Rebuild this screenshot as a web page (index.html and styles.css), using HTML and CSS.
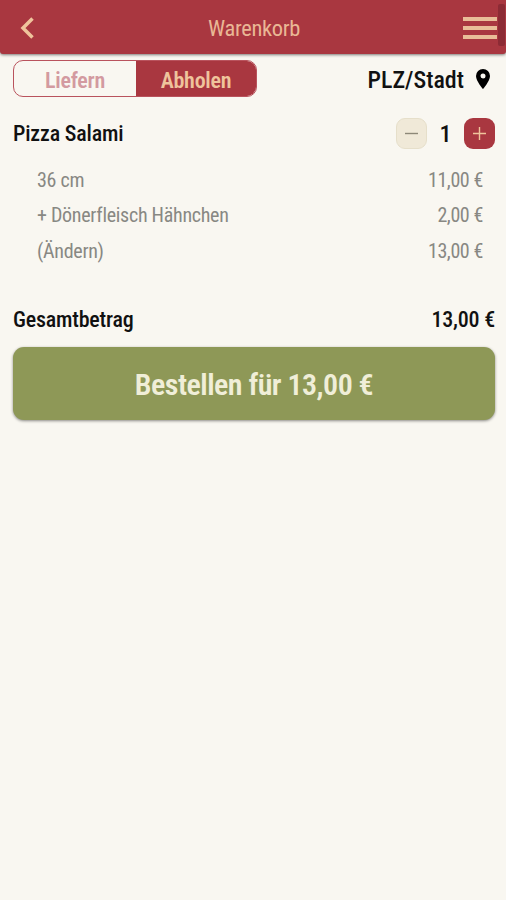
FILE: index.html
```html
<!DOCTYPE html>
<html lang="de">
<head>
<meta charset="utf-8">
<title>Warenkorb</title>
<link rel="stylesheet" href="styles.css">
</head>
<body>
<header class="bar">
  <svg class="back" viewBox="0 0 14 22"><path d="M12.500 1.500 3 11l9.500 9.500"/></svg>
  <h1>Warenkorb</h1>
  <div class="menu"><i></i><i></i><i></i></div>
  <div class="scroll"></div>
</header>
<main>
  <div class="top">
    <div class="toggle"><div class="off">Liefern</div><div class="on">Abholen</div></div>
    <div class="place"><span>PLZ/Stadt</span><svg class="pin" viewBox="0 0 14 20"><path fill-rule="evenodd" d="M7 0a7 7 0 0 0-7 7c0 5 7 13 7 13s7-8 7-13a7 7 0 0 0-7-7zm0 4.500a2.500 2.500 0 1 1 0 5 2.500 2.500 0 0 1 0-5z"/></svg></div>
  </div>
  <div class="item">
    <span>Pizza Salami</span>
    <div class="qty">
      <button class="minus"><svg viewBox="0 0 14 14"><path d="M0 7h14"/></svg></button>
      <b>1</b>
      <button class="plus"><svg viewBox="0 0 14 14"><path d="M0 7h14M7 0v14"/></svg></button>
    </div>
  </div>
  <div class="lines">
    <div><span>36 cm</span><span>11,00 €</span></div>
    <div><span>+ Dönerfleisch Hähnchen</span><span>2,00 €</span></div>
    <div><span>(Ändern)</span><span>13,00 €</span></div>
  </div>
  <div class="total"><span>Gesamtbetrag</span><span>13,00 €</span></div>
  <button class="order">Bestellen für 13,00 €</button>
</main>
</body>
</html>
```

FILE: styles.css
```css
* { box-sizing: border-box; }
body { margin: 0; height: 900px; overflow: hidden; background: #f9f7f1; color: #111; font-family: "Roboto Condensed", Roboto, sans-serif; font-stretch: 75%; }
button { padding: 0; border: 0; font: inherit; font-stretch: inherit; }
.bar { position: relative; height: 54px; padding: 2px 9px 0 20px; display: grid; grid-template-columns: 34px 1fr 34px; align-items: center; background: #a93740; border-radius: 0 0 3px 3px; box-shadow: 0 1px 3px rgba(0,0,0,.5); }
.back { width: 14px; height: 22px; fill: none; stroke: #efc49c; stroke-width: 3.500; }
h1 { margin: 0 9px 0 0; text-align: center; font-size: 22.500px; font-weight: 400; letter-spacing: -.35px; color: #e9b795; }
.menu { display: grid; gap: 5px; }
.menu i { height: 4px; background: #e9bd98; }
.scroll { position: absolute; right: 1px; top: 4px; width: 7px; height: 42px; background: #8c2b35; border-radius: 2px; }
main { padding: 6px 11px 0 13px; }
.top { display: flex; justify-content: space-between; height: 37px; }
.toggle { display: flex; width: 244px; border: 1px solid #b9535d; border-radius: 10px; overflow: hidden; font-size: 22px; font-weight: 600; letter-spacing: -.25px; }
.toggle div { display: flex; align-items: center; justify-content: center; padding-top: 3px; }
.off { width: 122px; color: #d39aa0; }
.on { flex: 1; background: #a93740; color: #efc49c; }
.place { display: flex; align-items: center; gap: 12px; padding: 2px 5px 0 0; font-size: 24px; font-weight: 500; }
.pin { width: 14px; height: 20px; margin-top: -2px; }
.item { display: flex; justify-content: space-between; align-items: center; height: 31px; margin-top: 21px; font-size: 22px; font-weight: 500; letter-spacing: -.17px; }
.qty { display: flex; align-items: center; }
.qty b { width: 37px; padding-top: 1px; text-align: center; font-size: 24px; font-weight: 500; }
.qty button { width: 31px; height: 31px; display: flex; align-items: center; justify-content: center; border-radius: 9px; }
.qty svg { width: 13px; height: 13px; fill: none; stroke: currentColor; stroke-width: 1.500; }
.minus { background: #f0e9d8; border: 1px solid #e6dfca; color: #8d8878; }
.plus { background: #a93740; color: #efc49c; }
.lines { margin-top: 13px; padding: 0 12px 0 24px; color: #888883; font-size: 20px; letter-spacing: -.28px; }
.lines span:last-child { letter-spacing: -.4px; }
.lines div { display: flex; align-items: center; justify-content: space-between; height: 35.500px; }
.total { display: flex; align-items: center; justify-content: space-between; height: 34px; margin-top: 33.500px; font-size: 22px; font-weight: 500; letter-spacing: -.2px; }
.order { display: flex; align-items: center; justify-content: center; width: 100%; height: 73px; margin-top: 11px; padding-top: 2px; border-radius: 11px; background: #8e9857; color: #f0eed8; font-size: 30px; font-weight: 600; letter-spacing: -.52px; box-shadow: 0 1px 3px rgba(0,0,0,.45); }
```
